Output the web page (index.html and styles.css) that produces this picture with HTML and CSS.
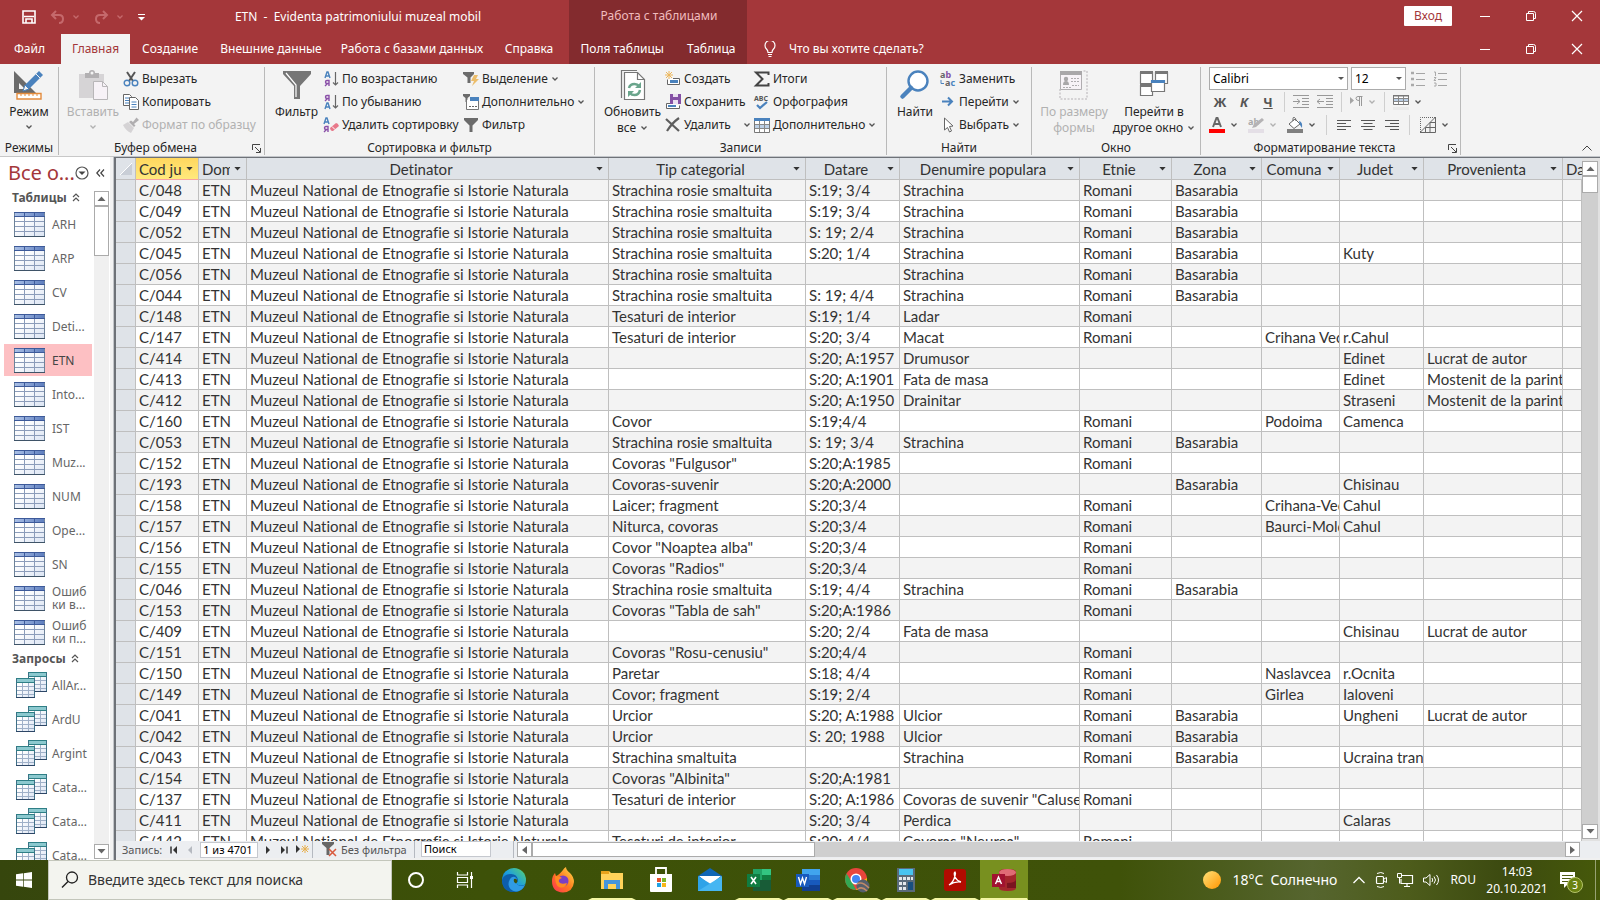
FILE: index.html
```html
<!DOCTYPE html>
<html lang="ru">
<head>
<meta charset="utf-8">
<title>ETN - Evidenta patrimoniului muzeal mobil</title>
<link rel="stylesheet" href="styles.css">
</head>
<body>
<svg class="defs" aria-hidden="true">
  <defs>
    <linearGradient id="gHead" x1="0" x2="1"><stop offset="0" stop-color="#a9bfe6"/><stop offset="1" stop-color="#5f7fbf"/></linearGradient>
    <linearGradient id="gBody" x1="0" y1="0" x2="1" y2="1"><stop offset="0.3" stop-color="#fff"/><stop offset="1" stop-color="#dbe4f3"/></linearGradient>
    <linearGradient id="gSun" x1="0" y1="0" x2="1" y2="1"><stop offset="0" stop-color="#ffe27a"/><stop offset="1" stop-color="#ff9500"/></linearGradient>
    <linearGradient id="gEdge" x1="0" y1="1" x2="1" y2="0"><stop offset="0" stop-color="#0c59a4"/><stop offset="0.5" stop-color="#1b9de2"/><stop offset="1" stop-color="#5bd66c"/></linearGradient>
    <linearGradient id="gFox" x1="0" y1="1" x2="1" y2="0"><stop offset="0" stop-color="#ff2f55"/><stop offset="0.5" stop-color="#ff7a1f"/><stop offset="1" stop-color="#ffe14a"/></linearGradient>
  </defs>
  <symbol id="chev" viewBox="0 0 8 6"><path d="M1.500 1.500 4 4l2.500-2.500" fill="none" stroke="currentColor" stroke-width="1.300"/></symbol>
  <symbol id="tbl" viewBox="0 0 31 25">
    <rect x=".5" y=".5" width="30" height="24" fill="url(#gBody)" stroke="#6d8299"/>
    <path d="M1 1h29v4H1z" fill="url(#gHead)"/><path d="M0 .5h31M0 4.500h31" stroke="#3d5a9a"/>
    <path d="M1 9.500h29M1 14.500h29M1 19.500h29M10.500 5v19M20.500 5v19" stroke="#8b9cba"/>
    <path d="M10.500 1v4M20.500 1v4" stroke="#3d5a9a"/><path d="M0 24.500h31" stroke="#3f5468"/>
  </symbol>
  <symbol id="qry" viewBox="0 0 31 26">
    <g id="qsheet"><rect x="12.500" y=".5" width="18" height="19" fill="url(#gBody)" stroke="#3f6f86"/><path d="M13 1h17v3H13z" fill="#8cc9cf"/><path d="M12 4.500h19M12 .5h19" stroke="#2f7f86"/><path d="M13 8.500h17M13 12.500h17M13 16.500h17M18.500 5v14M24.500 5v14" stroke="#9fb0c8"/><path d="M12 19.500h19" stroke="#2d4666"/></g>
    <use href="#qsheet" x="-12" y="6"/>
  </symbol>
  <symbol id="winmin" viewBox="0 0 12 12"><path d="M1 6.500h10" stroke="#fff"/></symbol>
  <symbol id="winres" viewBox="0 0 12 12"><path d="M1.500 3.500h7v7h-7zM3.500 3.500v-2h5q2 0 2 2v5h-2" fill="none" stroke="#fff"/></symbol>
  <symbol id="winx" viewBox="0 0 12 12"><path d="M1 1l10 10M11 1L1 11" stroke="#fff" stroke-width="1.200"/></symbol>
  <symbol id="launch" viewBox="0 0 9 9"><path d="M.5 6V.5H8M3 3l5 5M8.500 4v4.500H4" fill="none" stroke="#444"/></symbol>
  <symbol id="funnel" viewBox="0 0 16 16"><path d="M1 1h14v2L9.500 8.500V15h-3V8.500L1 3z" fill="#6b6b6b"/></symbol>
  <symbol id="arrdown" viewBox="0 0 9 5"><path d="M.5 0h8l-4 4.500z" fill="currentColor"/></symbol>
  <symbol id="dblup" viewBox="0 0 8 9"><path d="M1 4l3-3 3 3M1 8l3-3 3 3" fill="none" stroke="#555" stroke-width="1.200"/></symbol>
</svg>

<div class="app">
  <header class="titlebar">
    <div class="qat">
      <button aria-label="Сохранить файл"><svg width="14" height="14" viewBox="0 0 14 14"><path d="M1 1h12v12H1z" fill="none" stroke="#fff" stroke-width="1.600"/><path d="M2 6.500h10M4 13v-4h6v4" fill="none" stroke="#fff" stroke-width="1.600"/></svg></button>
      <button class="faded" aria-label="Отменить"><svg width="15" height="14" viewBox="0 0 15 14"><path d="M6 1 2 5l4 4M2 5h7q4 0 4 4t-4 4" fill="none" stroke="#c5696c" stroke-width="2"/></svg><svg class="chev" width="8" height="6"><use href="#chev"/></svg></button>
      <button class="faded" aria-label="Вернуть"><svg width="15" height="14" viewBox="0 0 15 14"><path d="M9 1l4 4-4 4M13 5H6Q2 5 2 9t4 4" fill="none" stroke="#c5696c" stroke-width="2"/></svg><svg class="chev" width="8" height="6"><use href="#chev"/></svg></button>
      <button aria-label="Настройка панели"><svg width="7" height="7" viewBox="0 0 7 7"><path d="M0 .5h7" stroke="#fff"/><path d="M0 3h7L3.500 6.500z" fill="#fff"/></svg></button>
    </div>
    <div class="doctitle">ETN&nbsp; -&nbsp; Evidenta patrimoniului muzeal mobil</div>
    <div class="ctxtitle">Работа с таблицами</div>
    <div class="winctl">
      <button class="login">Вход</button>
      <button aria-label="Свернуть"><svg width="12" height="12"><use href="#winmin"/></svg></button>
      <button aria-label="Восстановить"><svg width="12" height="12"><use href="#winres"/></svg></button>
      <button aria-label="Закрыть"><svg width="12" height="12"><use href="#winx"/></svg></button>
    </div>
  </header>

  <nav class="tabs">
    <button class="file">Файл</button>
    <button class="active">Главная</button>
    <button class="t3">Создание</button>
    <button class="t4">Внешние данные</button>
    <button class="t5">Работа с базами данных</button>
    <button class="t6">Справка</button>
    <div class="ctxtabs"><button>Поля таблицы</button><button>Таблица</button></div>
    <button class="tell"><svg width="12" height="17" viewBox="0 0 12 17"><path d="M4 11.500q0-2-1.500-3.500A5 5 0 1 1 9.500 8Q8 9.500 8 11.500zM4 13.500h4M4.500 15.500h3" fill="none" stroke="#fff" stroke-width="1.200"/></svg>Что вы хотите сделать?</button>
    <div class="winctl">
      <button aria-label="Свернуть документ"><svg width="12" height="12"><use href="#winmin"/></svg></button>
      <button aria-label="Восстановить документ"><svg width="12" height="12"><use href="#winres"/></svg></button>
      <button aria-label="Закрыть документ"><svg width="12" height="12"><use href="#winx"/></svg></button>
    </div>
  </nav>

  <section class="ribbon">
    <div class="group g1">
      <div class="tools">
        <button class="big"><svg width="32" height="32" viewBox="0 0 32 32"><path d="M1 2v22h22zM6 14l6 6H6z" fill="#6b6b6b" fill-rule="evenodd"/><path d="M10 22l2-6L26 2l4 4-14 14z" fill="#4a82bd"/><path d="M10 22l2-6 4 4z" fill="#f3f3f3" stroke="#4a82bd"/><path d="M26 2l4 4" stroke="#f3f3f3" stroke-width="1" transform="translate(-3 3)"/><path d="M4 24.500h24v5.500H4z" fill="#fff" stroke="#e38b3c" stroke-width="1.400"/><path d="M8 25v2M12 25v2M16 25v2M20 25v2M24 25v2" stroke="#e38b3c"/></svg><span>Режим</span><svg class="chev" width="8" height="6"><use href="#chev"/></svg></button>
      </div>
      <div class="caption"><span>Режимы</span></div>
    </div>
    <div class="group g2">
      <div class="tools">
        <button class="big" disabled><svg width="32" height="32" viewBox="0 0 32 32"><path d="M2 5h25v24H2z" fill="#d6d4d6"/><path d="M8 9V4h4q0-3 3-3t3 3h4v5z" fill="#b2b0b2"/><circle cx="15" cy="4" r="1.500" fill="#f3f3f3"/><path d="M16.500 12.500h9l5 5v13h-14z" fill="#f7f2f7" stroke="#b8b6b8"/><path d="M25.500 12.500v5h5" fill="none" stroke="#b8b6b8"/></svg><span>Вставить</span><svg class="chev" width="8" height="6"><use href="#chev"/></svg></button>
        <div class="col">
          <button class="cmd"><svg width="16" height="16" viewBox="0 0 16 16"><path d="M4 1l6 9M12 1L6 10" stroke="#555" stroke-width="2"/><circle cx="4" cy="12" r="2.800" fill="none" stroke="#4a82bd" stroke-width="1.400"/><circle cx="12" cy="12" r="2.800" fill="none" stroke="#4a82bd" stroke-width="1.400"/></svg>Вырезать</button>
          <button class="cmd"><svg width="16" height="16" viewBox="0 0 16 16"><path d="M.5.5h6l2 2v9h-8z" fill="#fff" stroke="#666"/><path d="M2 4h4M2 6.500h4M2 9h4" stroke="#4a82bd"/><path d="M6.500 3.500h6l3 3v9h-9z" fill="#fff" stroke="#666"/><path d="M8.500 8h5M8.500 10.500h5M8.500 13h5" stroke="#4a82bd"/></svg>Копировать</button>
          <button class="cmd" disabled><svg width="16" height="16" viewBox="0 0 16 16"><path d="M0 8l5-3 6 6-3 5q-5-2-8-8z" fill="#d5d3d5"/><path d="M6 5l5 5 1.500-1.500L11 7l5-4-2.500-2.500L10 5 8 3.500z" fill="#b0aeb0"/></svg>Формат по образцу</button>
        </div>
      </div>
      <div class="caption"><span>Буфер обмена</span><svg width="9" height="9"><use href="#launch"/></svg></div>
    </div>
    <div class="group g3">
      <div class="tools">
        <button class="big"><svg width="32" height="32" viewBox="0 0 32 32"><path d="M2 2h28v3L19 17v13h-6V17L2 5z" fill="#767676"/><path d="M5 4l10 12v12" fill="none" stroke="#fff" stroke-width="1.200"/></svg><span>Фильтр</span></button>
        <div class="col c1">
          <button class="cmd"><svg width="16" height="16" viewBox="0 0 16 16"><path d="M2 7l2-6h1l2 6M3 5h3" fill="none" stroke="#4a82bd" stroke-width="1.400"/><path d="M6 15V9.500H4q-1.500 0-1.500 1.500T4 12.500h2M4.500 12.500L2 15" fill="none" stroke="#8a4fa8" stroke-width="1.400"/><path d="M12.500 1v13M10 11.500l2.500 2.500 2.500-2.500" fill="none" stroke="#666" stroke-width="1.200"/></svg>По возрастанию</button>
          <button class="cmd"><svg width="16" height="16" viewBox="0 0 16 16"><path d="M2 15l2-6h1l2 6M3 13h3" fill="none" stroke="#4a82bd" stroke-width="1.400"/><path d="M6 7V1.500H4q-1.500 0-1.500 1.500T4 4.500h2M4.500 4.500L2 7" fill="none" stroke="#8a4fa8" stroke-width="1.400"/><path d="M12.500 1v13M10 11.500l2.500 2.500 2.500-2.500" fill="none" stroke="#666" stroke-width="1.200"/></svg>По убыванию</button>
          <button class="cmd"><svg width="16" height="16" viewBox="0 0 16 16"><path d="M1 7l2-6h1l2 6M2 5h3" fill="none" stroke="#4a82bd" stroke-width="1.400"/><path d="M5 15V9.500H3q-1.500 0-1.500 1.500T3 12.500h2M3.500 12.500L1 15" fill="none" stroke="#8a4fa8" stroke-width="1.400"/><path d="M7 11l6-5q2 0 3 3l-6 5q-2.500.5-3-3z" fill="#e8788a"/><path d="M9 9.500l3 3" stroke="#fff"/></svg>Удалить сортировку</button>
        </div>
        <div class="col">
          <button class="cmd"><svg width="16" height="16" viewBox="0 0 16 16"><path d="M0 1h11v2L7.500 6.500V12h-3V6.500L0 3z" fill="#6b6b6b"/><path d="M11 4h4l-2 4h3l-7 7 2-5H8z" fill="#ecbd6a"/></svg>Выделение<svg class="chev" width="8" height="6"><use href="#chev"/></svg></button>
          <button class="cmd"><svg width="16" height="16" viewBox="0 0 16 16"><path d="M0 0h7v2L4.500 4v4h-2V4L0 2z" fill="#6b6b6b"/><path d="M3.500 6v9.500h12V3" fill="#fff" stroke="#777"/><path d="M7 3h9v4H7z" fill="#4a82bd"/><path d="M6 12.500h2M9 12.500h2M12 12.500h2" stroke="#666"/></svg>Дополнительно<svg class="chev" width="8" height="6"><use href="#chev"/></svg></button>
          <button class="cmd"><svg width="16" height="16"><use href="#funnel"/></svg>Фильтр</button>
        </div>
      </div>
      <div class="caption"><span>Сортировка и фильтр</span></div>
    </div>
    <div class="group g4">
      <div class="tools">
        <button class="big"><svg width="32" height="32" viewBox="0 0 32 32"><path d="M4.500 29V1.500H20" fill="none" stroke="#777" stroke-width="1.200"/><path d="M7.500 3.500h13l7 7v20h-20z" fill="#fff" stroke="#777" stroke-width="1.200"/><path d="M20.500 3.500v7h7" fill="none" stroke="#777" stroke-width="1.200"/><path d="M12 19q1-4 5.500-4 3 0 4.500 2M23 21q-1 5-5.500 5-3 0-4.500-2" fill="none" stroke="#6aa58c" stroke-width="2.500"/><path d="M24 13v6h-6zM11 28v-6h6z" fill="#6aa58c"/></svg><span>Обновить</span><span>все <svg class="chev" width="8" height="6"><use href="#chev"/></svg></span></button>
        <div class="col c2">
          <button class="cmd"><svg width="16" height="16" viewBox="0 0 16 16"><path d="M4 0v8M0 4h8M1 1l6 6M7 1L1 7" stroke="#ecb65a"/><path d="M2.500 8.500v5h12v-6H8" fill="#fff" stroke="#666"/><path d="M5 9h8v3H5z" fill="#4a82bd"/></svg>Создать</button>
          <button class="cmd"><svg width="16" height="16" viewBox="0 0 16 16"><path d="M5 9.500H1.500v5h13v-3" fill="#fff" stroke="#666"/><path d="M3 11h8v2H3z" fill="#4a82bd"/><path d="M5 0h11v10H5z" fill="#8450a5"/><path d="M8 0h5v3H8zM8 6h5v4H8z" fill="#eadff0"/></svg>Сохранить</button>
          <button class="cmd"><svg width="16" height="16" viewBox="0 0 16 16"><path d="M1 2l13 12M14 1Q7 6 2 14" fill="none" stroke="#5e5e5e" stroke-width="2.200"/></svg>Удалить<svg class="chev far" width="8" height="6"><use href="#chev"/></svg></button>
        </div>
        <div class="col">
          <button class="cmd"><svg width="16" height="16" viewBox="0 0 16 16"><path d="M14.500 4V1.500H2L8.500 8 2 14.500h12.500V12" fill="none" stroke="#444" stroke-width="2"/></svg>Итоги</button>
          <button class="cmd"><svg width="16" height="16" viewBox="0 0 16 16"><text x="0" y="7" font-size="7" font-weight="700" fill="#555">ABC</text><path d="M3 11l3 3 7-6" fill="none" stroke="#4a82bd" stroke-width="2.200"/></svg>Орфография</button>
          <button class="cmd"><svg width="16" height="16" viewBox="0 0 16 16"><path d="M.5 3.500h15v12H.5z" fill="#fff" stroke="#777"/><path d="M0 1h16v3H0z" fill="#4a82bd"/><path d="M1 8h14v3H1z" fill="#bcd0e6"/><path d="M1 7.500h14M1 11.500h14M5.500 4v11M10.500 4v11" stroke="#888"/></svg>Дополнительно<svg class="chev" width="8" height="6"><use href="#chev"/></svg></button>
        </div>
      </div>
      <div class="caption"><span>Записи</span></div>
    </div>
    <div class="group g5">
      <div class="tools">
        <button class="big"><svg width="32" height="32" viewBox="0 0 32 32"><circle cx="19" cy="12" r="9.500" fill="#fff" stroke="#4a82bd" stroke-width="2.400"/><path d="M12 19L3.500 27.500" stroke="#4a82bd" stroke-width="4.500" stroke-linecap="round"/></svg><span>Найти</span></button>
        <div class="col">
          <button class="cmd"><svg width="16" height="16" viewBox="0 0 16 16"><g font-size="9" font-weight="700"><text x="0" y="7" fill="#666">a<tspan fill="#8450a5">b</tspan></text><text x="5" y="15" fill="#666">a<tspan fill="#4a82bd">c</tspan></text></g><path d="M1 9v3.500h3" fill="none" stroke="#4a82bd"/></svg>Заменить</button>
          <button class="cmd"><svg width="16" height="16" viewBox="0 0 16 16"><path d="M2 7.500h10M8 3.500l4 4-4 4" fill="none" stroke="#4a82bd" stroke-width="2"/></svg>Перейти<svg class="chev" width="8" height="6"><use href="#chev"/></svg></button>
          <button class="cmd"><svg width="16" height="16" viewBox="0 0 16 16"><path d="M4.500 1v12l3-2.500 2 4.500 2-1-2-4.500 3.500-.5z" fill="#fff" stroke="#666"/></svg>Выбрать<svg class="chev" width="8" height="6"><use href="#chev"/></svg></button>
        </div>
      </div>
      <div class="caption"><span>Найти</span></div>
    </div>
    <div class="group g6">
      <div class="tools">
        <button class="big" disabled><svg width="32" height="32" viewBox="0 0 32 32"><path d="M2 20v10h27V2h-4" fill="none" stroke="#b5b1b5" stroke-dasharray="2 1.500"/><path d="M2.500 2.500h21v18h-21z" fill="#f7f2f7" stroke="#b0adb0"/><path d="M2 2h22v4H2z" fill="#a9a7a9"/><circle cx="8" cy="10" r="2.200" fill="#a9a7a9"/><path d="M5 16q0-4 3-4t3 4z" fill="#a9a7a9"/><path d="M13 9.500h8M13 12.500h8M14 16.500h7M5 18.500h8" stroke="#b0adb0" stroke-dasharray="2 1"/></svg><span>По размеру</span><span>формы</span></button>
        <button class="big"><svg width="32" height="32" viewBox="0 0 32 32"><g fill="#fff" stroke="#777" stroke-width="1.200"><path d="M2.500 3.500h12v11h-12zM17.500 3.500h12v11h-12zM2.500 16.500h12v10h-12z"/></g><path d="M2 2h13v3H2zM17 2h13v3H17zM2 15h13v3H2z" fill="#777"/><path d="M13.500 11.500h13v11h-13z" fill="#fff" stroke="#777" stroke-width="1.200"/><path d="M13 11h14v3H13z" fill="#4a82bd"/></svg><span>Перейти в</span><span>другое окно <svg class="chev" width="8" height="6"><use href="#chev"/></svg></span></button>
      </div>
      <div class="caption"><span>Окно</span></div>
    </div>
    <div class="group g7">
      <div class="fmt">
        <div class="frow">
          <label class="combo font"><select aria-label="Шрифт"><option>Calibri</option></select></label>
          <label class="combo size"><select aria-label="Размер шрифта"><option>12</option></select></label>
          <button disabled aria-label="Маркеры"><svg width="14" height="16" viewBox="0 0 14 16"><path d="M0 2h3M0 8h3M0 14h3" stroke="#aaa" stroke-width="2.500"/><path d="M5 2.500h9M5 8.500h9M5 14.500h9" stroke="#a5a5a5"/></svg></button>
          <button disabled aria-label="Нумерация"><svg width="14" height="16" viewBox="0 0 14 16"><path d="M1 1h1.500v4M1 6.500h2L1 9.500h2M1 12h2v3H1" fill="none" stroke="#aaa"/><path d="M5 2.500h9M5 8.500h9M5 14.500h9" stroke="#a5a5a5"/></svg></button>
        </div>
        <div class="frow second">
          <button class="ltr"><b>Ж</b></button><button class="ltr"><b><i>К</i></b></button><button class="ltr"><b><u>Ч</u></b></button>
          <span class="vs"></span>
          <button disabled aria-label="Увеличить отступ"><svg width="16" height="13" viewBox="0 0 16 13"><path d="M0 .5h16M9 3.500h7M9 6.500h7M9 9.500h7M0 12.500h16M0 6.500h7M4 4l3 2.500L4 9" fill="none" stroke="#999"/></svg></button>
          <button disabled aria-label="Уменьшить отступ"><svg width="16" height="13" viewBox="0 0 16 13"><path d="M0 .5h16M9 3.500h7M9 6.500h7M9 9.500h7M0 12.500h16M0 6.500h7M3 4L0 6.500 3 9" fill="none" stroke="#999"/></svg></button>
          <span class="vs"></span>
          <button disabled class="wd" aria-label="Направление текста"><svg width="13" height="11" viewBox="0 0 13 11"><path d="M0 1v7l4-3.500z" fill="#a5a5a5"/><path d="M12.500.5H8q-2 0-2 2t3 2M9.500 0v10M11.500 0v10" fill="none" stroke="#999"/></svg><svg class="chev" width="8" height="6"><use href="#chev"/></svg></button>
          <span class="vs"></span>
          <button class="wd" aria-label="Сетка"><svg width="16" height="16" viewBox="0 0 16 16"><path d="M.5 1.500h15v9H.5z" fill="#fff" stroke="#777"/><path d="M0 1h16v1.500H0z" fill="#777"/><path d="M1 5h14v2.500H1z" fill="#bcd0e6"/><path d="M1 4.500h14M1 7.500h14M5.500 2v8M10.500 2v8" stroke="#888"/><path d="M0 13h16v3H0z" fill="#eaeaea"/></svg><svg class="chev" width="8" height="6"><use href="#chev"/></svg></button>
        </div>
        <div class="frow third">
          <button class="wd" aria-label="Цвет текста"><svg width="16" height="16" viewBox="0 0 16 16"><path d="M4 10L7.500 1h1L12 10M5.500 7h5" fill="none" stroke="#666" stroke-width="2"/><path d="M0 12h16v4H0z" fill="#f00"/></svg><svg class="chev" width="8" height="6"><use href="#chev"/></svg></button>
          <button class="wd" disabled aria-label="Выделение цветом"><svg width="16" height="16" viewBox="0 0 16 16"><text x="0" y="8" font-size="9" font-weight="700" fill="#aaa">ab</text><path d="M4 11l2-4 8-6 2 2-8 7z" fill="#b5b3b5"/><path d="M0 12h16v4H0z" fill="#e4dfe6"/></svg><svg class="chev" width="8" height="6"><use href="#chev"/></svg></button>
          <button class="wd" aria-label="Цвет фона"><svg width="16" height="16" viewBox="0 0 16 16"><path d="M2 7l6-5 5 5-6 4.500z" fill="#fff" stroke="#666"/><path d="M6 4V1.500q0-1.500 1.500-1T9 4" fill="none" stroke="#666"/><path d="M12 4q4 1 3 7l-2-3z" fill="#4a82bd"/><path d="M0 12h16v4H0z" fill="#7f7f7f"/></svg><svg class="chev" width="8" height="6"><use href="#chev"/></svg></button>
          <span class="vs"></span>
          <button aria-label="По левому краю"><svg width="14" height="12" viewBox="0 0 14 12"><path d="M0 1.500h14M0 4.500h9M0 7.500h14M0 10.500h9" stroke="#555"/></svg></button>
          <button aria-label="По центру"><svg width="14" height="12" viewBox="0 0 14 12"><path d="M0 1.500h14M2.500 4.500h9M0 7.500h14M2.500 10.500h9" stroke="#555"/></svg></button>
          <button aria-label="По правому краю"><svg width="14" height="12" viewBox="0 0 14 12"><path d="M0 1.500h14M5 4.500h9M0 7.500h14M5 10.500h9" stroke="#555"/></svg></button>
          <span class="vs"></span>
          <button class="wd" aria-label="Цвет строк"><svg width="16" height="16" viewBox="0 0 16 16"><path d="M.5 15V.5H15" fill="none" stroke="#666" stroke-dasharray="1 1"/><path d="M15.500 0v15.500H0zM15 5.500h-5v10M15 10.500H5.500v5" fill="none" stroke="#666"/></svg><svg class="chev" width="8" height="6"><use href="#chev"/></svg></button>
        </div>
      </div>
      <div class="caption"><span>Форматирование текста</span><svg width="9" height="9"><use href="#launch"/></svg></div>
    </div>
    <button class="collapse" aria-label="Свернуть ленту"><svg width="10" height="6" viewBox="0 0 10 6"><path d="M.5 5.500L5 1l4.500 4.500" fill="none" stroke="#444"/></svg></button>
  </section>

  <main class="work">
    <aside class="nav">
      <div class="navhead">
        <h1>Все о...</h1>
        <button aria-label="Категории"><svg width="14" height="14" viewBox="0 0 14 14"><circle cx="7" cy="7" r="6" fill="none" stroke="#555" stroke-width="1.200"/><path d="M3.500 5.500h7L7 9z" fill="#444"/></svg></button>
        <button aria-label="Скрыть область"><svg width="9" height="8" viewBox="0 0 9 8"><path d="M4 .5L.8 4 4 7.500M8 .5L4.800 4 8 7.500" fill="none" stroke="#444" stroke-width="1.200"/></svg></button>
      </div>
      <div class="navbody">
        <div class="navlist">
          <h2>Таблицы <svg width="8" height="9"><use href="#dblup"/></svg></h2>
          <ul>
            <li><svg width="31" height="25"><use href="#tbl"/></svg><span>ARH</span></li>
            <li><svg width="31" height="25"><use href="#tbl"/></svg><span>ARP</span></li>
            <li><svg width="31" height="25"><use href="#tbl"/></svg><span>CV</span></li>
            <li><svg width="31" height="25"><use href="#tbl"/></svg><span>Deti...</span></li>
            <li class="sel"><svg width="31" height="25"><use href="#tbl"/></svg><span>ETN</span></li>
            <li><svg width="31" height="25"><use href="#tbl"/></svg><span>Into...</span></li>
            <li><svg width="31" height="25"><use href="#tbl"/></svg><span>IST</span></li>
            <li><svg width="31" height="25"><use href="#tbl"/></svg><span>Muz...</span></li>
            <li><svg width="31" height="25"><use href="#tbl"/></svg><span>NUM</span></li>
            <li><svg width="31" height="25"><use href="#tbl"/></svg><span>Ope...</span></li>
            <li><svg width="31" height="25"><use href="#tbl"/></svg><span>SN</span></li>
            <li><svg width="31" height="25"><use href="#tbl"/></svg><span>Ошиб<br>ки в...</span></li>
            <li><svg width="31" height="25"><use href="#tbl"/></svg><span>Ошиб<br>ки п...</span></li>
          </ul>
          <h2>Запросы <svg width="8" height="9"><use href="#dblup"/></svg></h2>
          <ul class="queries">
            <li><svg width="31" height="26"><use href="#qry"/></svg><span>AllAr...</span></li>
            <li><svg width="31" height="26"><use href="#qry"/></svg><span>ArdU</span></li>
            <li><svg width="31" height="26"><use href="#qry"/></svg><span>Argint</span></li>
            <li><svg width="31" height="26"><use href="#qry"/></svg><span>Cata...</span></li>
            <li><svg width="31" height="26"><use href="#qry"/></svg><span>Cata...</span></li>
            <li><svg width="31" height="26"><use href="#qry"/></svg><span>Cata...</span></li>
          </ul>
        </div>
        <div class="vscroll light">
          <button class="up" aria-label="Вверх"><svg width="9" height="5"><use href="#arrdown"/></svg></button>
          <div class="thumb"></div>
          <button class="down" aria-label="Вниз"><svg width="9" height="5"><use href="#arrdown"/></svg></button>
        </div>
      </div>
    </aside>

    <section class="sheet">
      <div class="gridrow">
        <div class="gridwrap">
<table class="grid">
<colgroup><col class="w0"><col class="w1"><col class="w2"><col class="w3"><col class="w4"><col class="w5"><col class="w6"><col class="w7"><col class="w8"><col class="w9"><col class="w10"><col class="w11"><col></colgroup>
<thead><tr>
<td class="corner"><svg width="12" height="12" viewBox="0 0 12 12"><path d="M12 0v12H0z" fill="#c9ced6"/><path d="M0 12L12 0" stroke="#fff"/></svg></td>
<th class="cur"><div><span class="l">Cod ju</span><svg viewBox="0 0 9 5"><use href="#arrdown"/></svg></div></th>
<th><div><span class="l">Dom</span><svg viewBox="0 0 9 5"><use href="#arrdown"/></svg></div></th>
<th><div><span>Detinator</span><svg viewBox="0 0 9 5"><use href="#arrdown"/></svg></div></th>
<th><div><span>Tip categorial</span><svg viewBox="0 0 9 5"><use href="#arrdown"/></svg></div></th>
<th><div><span>Datare</span><svg viewBox="0 0 9 5"><use href="#arrdown"/></svg></div></th>
<th><div><span>Denumire populara</span><svg viewBox="0 0 9 5"><use href="#arrdown"/></svg></div></th>
<th><div><span>Etnie</span><svg viewBox="0 0 9 5"><use href="#arrdown"/></svg></div></th>
<th><div><span>Zona</span><svg viewBox="0 0 9 5"><use href="#arrdown"/></svg></div></th>
<th><div><span>Comuna</span><svg viewBox="0 0 9 5"><use href="#arrdown"/></svg></div></th>
<th><div><span>Judet</span><svg viewBox="0 0 9 5"><use href="#arrdown"/></svg></div></th>
<th><div><span>Provenienta</span><svg viewBox="0 0 9 5"><use href="#arrdown"/></svg></div></th>
<th class="last"><div><span class="l">Da</span></div></th>
</tr></thead>
<tbody>
<tr><td><td>C/048<td>ETN<td>Muzeul National de Etnografie si Istorie Naturala<td>Strachina rosie smaltuita<td>S:19; 3/4<td>Strachina<td>Romani<td>Basarabia<td><td><td><td>
<tr><td><td>C/049<td>ETN<td>Muzeul National de Etnografie si Istorie Naturala<td>Strachina rosie smaltuita<td>S:19; 3/4<td>Strachina<td>Romani<td>Basarabia<td><td><td><td>
<tr><td><td>C/052<td>ETN<td>Muzeul National de Etnografie si Istorie Naturala<td>Strachina rosie smaltuita<td>S: 19; 2/4<td>Strachina<td>Romani<td>Basarabia<td><td><td><td>
<tr><td><td>C/045<td>ETN<td>Muzeul National de Etnografie si Istorie Naturala<td>Strachina rosie smaltuita<td>S:20; 1/4<td>Strachina<td>Romani<td>Basarabia<td><td>Kuty<td><td>
<tr><td><td>C/056<td>ETN<td>Muzeul National de Etnografie si Istorie Naturala<td>Strachina rosie smaltuita<td><td>Strachina<td>Romani<td>Basarabia<td><td><td><td>
<tr><td><td>C/044<td>ETN<td>Muzeul National de Etnografie si Istorie Naturala<td>Strachina rosie smaltuita<td>S: 19; 4/4<td>Strachina<td>Romani<td>Basarabia<td><td><td><td>
<tr><td><td>C/148<td>ETN<td>Muzeul National de Etnografie si Istorie Naturala<td>Tesaturi de interior<td>S:19; 1/4<td>Ladar<td>Romani<td><td><td><td><td>
<tr><td><td>C/147<td>ETN<td>Muzeul National de Etnografie si Istorie Naturala<td>Tesaturi de interior<td>S:20; 3/4<td>Macat<td>Romani<td><td>Crihana Vec<td>r.Cahul<td><td>
<tr><td><td>C/414<td>ETN<td>Muzeul National de Etnografie si Istorie Naturala<td><td>S:20; A:1957<td>Drumusor<td><td><td><td>Edinet<td>Lucrat de autor<td>
<tr><td><td>C/413<td>ETN<td>Muzeul National de Etnografie si Istorie Naturala<td><td>S:20; A:1901<td>Fata de masa<td><td><td><td>Edinet<td>Mostenit de la parint<td>
<tr><td><td>C/412<td>ETN<td>Muzeul National de Etnografie si Istorie Naturala<td><td>S:20; A:1950<td>Drainitar<td><td><td><td>Straseni<td>Mostenit de la parint<td>
<tr><td><td>C/160<td>ETN<td>Muzeul National de Etnografie si Istorie Naturala<td>Covor<td>S:19;4/4<td><td>Romani<td><td>Podoima<td>Camenca<td><td>
<tr><td><td>C/053<td>ETN<td>Muzeul National de Etnografie si Istorie Naturala<td>Strachina rosie smaltuita<td>S: 19; 3/4<td>Strachina<td>Romani<td>Basarabia<td><td><td><td>
<tr><td><td>C/152<td>ETN<td>Muzeul National de Etnografie si Istorie Naturala<td>Covoras "Fulgusor"<td>S:20;A:1985<td><td>Romani<td><td><td><td><td>
<tr><td><td>C/193<td>ETN<td>Muzeul National de Etnografie si Istorie Naturala<td>Covoras-suvenir<td>S:20;A:2000<td><td><td>Basarabia<td><td>Chisinau<td><td>
<tr><td><td>C/158<td>ETN<td>Muzeul National de Etnografie si Istorie Naturala<td>Laicer; fragment<td>S:20;3/4<td><td>Romani<td><td>Crihana-Vec<td>Cahul<td><td>
<tr><td><td>C/157<td>ETN<td>Muzeul National de Etnografie si Istorie Naturala<td>Niturca, covoras<td>S:20;3/4<td><td>Romani<td><td>Baurci-Mold<td>Cahul<td><td>
<tr><td><td>C/156<td>ETN<td>Muzeul National de Etnografie si Istorie Naturala<td>Covor "Noaptea alba"<td>S:20;3/4<td><td>Romani<td><td><td><td><td>
<tr><td><td>C/155<td>ETN<td>Muzeul National de Etnografie si Istorie Naturala<td>Covoras "Radios"<td>S:20;3/4<td><td>Romani<td><td><td><td><td>
<tr><td><td>C/046<td>ETN<td>Muzeul National de Etnografie si Istorie Naturala<td>Strachina rosie smaltuita<td>S:19; 4/4<td>Strachina<td>Romani<td>Basarabia<td><td><td><td>
<tr><td><td>C/153<td>ETN<td>Muzeul National de Etnografie si Istorie Naturala<td>Covoras "Tabla de sah"<td>S:20;A:1986<td><td>Romani<td><td><td><td><td>
<tr><td><td>C/409<td>ETN<td>Muzeul National de Etnografie si Istorie Naturala<td><td>S:20; 2/4<td>Fata de masa<td><td><td><td>Chisinau<td>Lucrat de autor<td>
<tr><td><td>C/151<td>ETN<td>Muzeul National de Etnografie si Istorie Naturala<td>Covoras "Rosu-cenusiu"<td>S:20;4/4<td><td>Romani<td><td><td><td><td>
<tr><td><td>C/150<td>ETN<td>Muzeul National de Etnografie si Istorie Naturala<td>Paretar<td>S:18; 4/4<td><td>Romani<td><td>Naslavcea<td>r.Ocnita<td><td>
<tr><td><td>C/149<td>ETN<td>Muzeul National de Etnografie si Istorie Naturala<td>Covor; fragment<td>S:19; 2/4<td><td>Romani<td><td>Girlea<td>Ialoveni<td><td>
<tr><td><td>C/041<td>ETN<td>Muzeul National de Etnografie si Istorie Naturala<td>Urcior<td>S:20; A:1988<td>Ulcior<td>Romani<td>Basarabia<td><td>Ungheni<td>Lucrat de autor<td>
<tr><td><td>C/042<td>ETN<td>Muzeul National de Etnografie si Istorie Naturala<td>Urcior<td>S: 20; 1988<td>Ulcior<td>Romani<td>Basarabia<td><td><td><td>
<tr><td><td>C/043<td>ETN<td>Muzeul National de Etnografie si Istorie Naturala<td>Strachina smaltuita<td><td>Strachina<td>Romani<td>Basarabia<td><td>Ucraina tran<td><td>
<tr><td><td>C/154<td>ETN<td>Muzeul National de Etnografie si Istorie Naturala<td>Covoras "Albinita"<td>S:20;A:1981<td><td><td><td><td><td><td>
<tr><td><td>C/137<td>ETN<td>Muzeul National de Etnografie si Istorie Naturala<td>Tesaturi de interior<td>S:20; A:1986<td>Covoras de suvenir "Caluse<td>Romani<td><td><td><td><td>
<tr><td><td>C/411<td>ETN<td>Muzeul National de Etnografie si Istorie Naturala<td><td>S:20; 3/4<td>Perdica<td><td><td><td>Calaras<td><td>
<tr><td><td>C/142<td>ETN<td>Muzeul National de Etnografie si Istorie Naturala<td>Tesaturi de interior<td>S:20; 4/4<td>Covoras "Neurea"<td>Romani<td><td><td><td><td>
</tbody>
</table>
        </div>
        <div class="vscroll dark">
          <button class="up" aria-label="Вверх"><svg width="9" height="5"><use href="#arrdown"/></svg></button>
          <div class="thumb"></div>
          <button class="down" aria-label="Вниз"><svg width="9" height="5"><use href="#arrdown"/></svg></button>
        </div>
      </div>
      <div class="recbar">
        <div class="recnav">
          <label for="rec">Запись:</label>
          <button aria-label="Первая"><svg width="8" height="8" viewBox="0 0 8 8"><path d="M1 .5v7" stroke="#333" stroke-width="1.500"/><path d="M7 0v8L3 4z" fill="#333"/></svg></button>
          <button aria-label="Предыдущая"><svg width="8" height="8" viewBox="0 0 8 8"><path d="M6 0v8L2 4z" fill="#b5b9c0"/></svg></button>
          <input id="rec" class="rec" value="1 из 4701">
          <button aria-label="Следующая"><svg width="8" height="8" viewBox="0 0 8 8"><path d="M2 0v8l4-4z" fill="#333"/></svg></button>
          <button aria-label="Последняя"><svg width="8" height="8" viewBox="0 0 8 8"><path d="M7 .5v7" stroke="#333" stroke-width="1.500"/><path d="M1 0v8l4-4z" fill="#333"/></svg></button>
          <button aria-label="Новая запись"><svg width="13" height="9" viewBox="0 0 13 9"><path d="M0 0v8l4-4z" fill="#333"/><path d="M9 0v8M5 4h8M6 1l6 6M12 1L6 7" stroke="#e8b04f"/></svg></button>
        </div>
        <button class="nofilter"><svg width="15" height="15" viewBox="0 0 15 15"><path d="M0 0h12v2L7.500 6v7h-3V6L0 2z" fill="#666"/><path d="M7 7l7 7M14 7l-7 7" stroke="#d9583b" stroke-width="1.500"/></svg>Без фильтра</button>
        <div class="find"><input class="search" aria-label="Поиск" value="Поиск"></div>
        <div class="hscroll">
          <button class="left" aria-label="Влево"><svg width="5" height="8" viewBox="0 0 5 8"><path d="M5 0v8L0 4z" fill="#666"/></svg></button>
          <div class="thumb"></div>
          <button class="right" aria-label="Вправо"><svg width="5" height="8" viewBox="0 0 5 8"><path d="M0 0v8l5-4z" fill="#666"/></svg></button>
        </div>
      </div>
    </section>
  </main>

  <footer class="taskbar">
    <button class="start" aria-label="Пуск"><svg width="16" height="16" viewBox="0 0 16 16"><path d="M0 2.300L7 1.300V7.600H0zM7.700 1.200L16 0v7.600H7.700zM0 8.400h7v6.300L0 13.700zM7.700 8.400H16V16l-8.300-1.200z" fill="#fff"/></svg></button>
    <label class="wsearch"><svg width="18" height="18" viewBox="0 0 18 18"><circle cx="11" cy="6.500" r="5.500" fill="none" stroke="#222" stroke-width="1.300"/><path d="M7 10.500L1 16.500" stroke="#222" stroke-width="1.500"/></svg><input type="text" placeholder="Введите здесь текст для поиска"></label>
    <div class="apps">
      <button aria-label="Кортана"><svg width="24" height="26" viewBox="0 0 24 26"><circle cx="12" cy="13" r="7" fill="none" stroke="#fff" stroke-width="2"/></svg></button>
      <button aria-label="Представление задач"><svg width="24" height="26" viewBox="0 0 24 26"><path d="M4.500 5v3h10V5M4.500 21v-3h10v3M4.500 10.500h10v5h-10zM18.500 5v16" fill="none" stroke="#fff" stroke-width="1.200"/><path d="M17 9h3v3h-3z" fill="#fff"/></svg></button>
      <button aria-label="Edge"><svg width="26" height="26" viewBox="0 0 26 26"><circle cx="13" cy="13" r="12" fill="url(#gEdge)"/><path d="M1 13Q3 7 10 7q6 0 7 6 0 2-1.500 3 1 3 5 2.500 2 0 4-1.500-3 8-12 8Q1 25 1 13z" fill="#0d5eab"/><path d="M9 12q2-3 5-2 3 1.500 1.500 5 0 4 5.500 4 2-.5 3-1-3 6-9 6.500-7-1-7.500-7 0-3 1.500-5.500z" fill="#2f9be4"/><path d="M13 12q2-1 3 1t-1 3.500Q12 15 13 12z" fill="#3d5108"/></svg></button>
      <button aria-label="Firefox"><svg width="26" height="26" viewBox="0 0 26 26"><path d="M13 3q1-2 3-3 0 3 4 6 4 4 4 9-1 10-11 10.500Q2 25 2 14q0-5 3-8l1 3q3-1 7-6z" fill="url(#gFox)"/><circle cx="13" cy="14" r="5.500" fill="#7a3fc4"/><path d="M5 9q5 0 7 2-4 1-3 4 2 3 8 1-2 6-8 4-4-2-4-11z" fill="#ff8a22"/></svg></button>
      <button class="run" aria-label="Проводник"><svg width="24" height="22" viewBox="0 0 24 22"><path d="M1 2h8l2 2h12v16H1z" fill="#ffd35a"/><path d="M1 2h8v3H1z" fill="#e8a41c"/><path d="M4 20v-9h16v9h-4v-5H8v5z" fill="#4495dc"/></svg></button>
      <button aria-label="Магазин"><svg width="24" height="26" viewBox="0 0 24 26"><path d="M7 7V1h10v6" fill="none" stroke="#fff" stroke-width="1.800"/><path d="M1 7h22v17q0 1-1 1H2q-1 0-1-1z" fill="#fff"/><path d="M8 11h4v4H8z" fill="#e8502a"/><path d="M13 11h4v4h-4z" fill="#7db62a"/><path d="M8 16h4v4H8z" fill="#1fa2e4"/><path d="M13 16h4v4h-4z" fill="#f8b71a"/></svg></button>
      <button aria-label="Почта"><svg width="24" height="26" viewBox="0 0 24 26"><path d="M0 9l12-8 12 8v15H0z" fill="#1066b5"/><path d="M1 9h22l-11 9z" fill="#fff"/><path d="M0 9l24 15H0z" fill="#2ea3e8"/><path d="M24 9v15H0z" fill="#46b6f2"/></svg></button>
      <button class="run" aria-label="Excel"><svg width="24" height="24" viewBox="0 0 24 24"><path d="M6 1h9v11H6z" fill="#21a366"/><path d="M15 1h9v6h-9z" fill="#33c481"/><path d="M15 7h9v10h-9z" fill="#107c41"/><path d="M6 12h18v11H6z" fill="#185c37"/><path d="M0 6h13v13H0z" fill="#107c41"/><path d="M4 9l5 7M9 9l-5 7" stroke="#fff" stroke-width="1.600"/></svg></button>
      <button class="run" aria-label="Word"><svg width="24" height="24" viewBox="0 0 24 24"><path d="M6 1h18v6H6z" fill="#41a5ee"/><path d="M6 7h18v5H6z" fill="#2b7cd3"/><path d="M6 12h18v5H6z" fill="#185abd"/><path d="M6 17h18v6H6z" fill="#103f91"/><path d="M0 6h13v13H0z" fill="#185abd"/><path d="M2.500 9l2 7 2-6 2 6 2-7" fill="none" stroke="#fff" stroke-width="1.400"/></svg></button>
      <button class="run" aria-label="Chrome"><svg width="26" height="26" viewBox="0 0 26 26"><circle cx="12" cy="12" r="11" fill="#e8453c"/><path d="M2.500 6.500L9 17l3 6Q1 22 1 12q0-3 1.500-5.500z" fill="#34a853"/><path d="M23 11q0 11-11 12l5-8z" fill="#fbbc05"/><circle cx="12" cy="12" r="5.500" fill="#fff"/><circle cx="12" cy="12" r="4" fill="#4285f4"/><circle cx="19" cy="19" r="6.500" fill="#555f6c"/><path d="M13 17q5-3 12 4M14 22q4-3 9 2" fill="none" stroke="#c08a68" stroke-width="1.500"/></svg></button>
      <button class="run" aria-label="Калькулятор"><svg width="18" height="26" viewBox="0 0 18 26"><path d="M0 1h18v24H0z" fill="#5a6b7a"/><path d="M2 2h14v6H2z" fill="#48c4f0"/><g fill="#e3e7ea"><path d="M2 10h3v3H2zM6 10h3v3H6zM10 10h3v3h-3zM2 15h3v3H2zM6 15h3v3H6zM2 20h3v3H2zM6 20h3v3H6zM14 10h2v3h-2z"/></g><path d="M11 15h5v8h-5z" fill="#184f80"/></svg></button>
      <button class="run" aria-label="Acrobat"><svg width="22" height="24" viewBox="0 0 22 24"><rect x="0" y="1" width="22" height="22" rx="3" fill="#b30b00"/><path d="M5 17q4-2 6-9 1-3 0-4-1.500 1 0 5 2 4 6 5-6-1-12 3z" fill="none" stroke="#fff" stroke-width="1.300"/></svg></button>
      <button class="run on" aria-label="Access"><svg width="24" height="24" viewBox="0 0 24 24"><path d="M7 4q0-3 8.500-3T24 4v16q0 3-8.500 3T7 20z" fill="#a4262c"/><ellipse cx="15.500" cy="4.500" rx="8.500" ry="3.500" fill="#e06b75"/><path d="M24 11q0 4-9 4v5h9z" fill="#7a1420"/><path d="M0 6h13v13H0z" fill="#a11230"/><path d="M3.500 16l3-7 3 7M4.500 13.500h4" fill="none" stroke="#fff" stroke-width="1.400"/></svg></button>
    </div>
    <div class="tray">
      <button class="weather"><svg width="20" height="20" viewBox="0 0 20 20"><circle cx="10" cy="10" r="9" fill="url(#gSun)"/></svg><span>18°C&nbsp; Солнечно</span></button>
      <button aria-label="Скрытые значки"><svg width="12" height="8" viewBox="0 0 12 8"><path d="M.5 7L6 1.500 11.500 7" fill="none" stroke="#fff" stroke-width="1.300"/></svg></button>
      <button aria-label="Камера"><svg width="14" height="18" viewBox="0 0 14 18"><path d="M3 2.500q4-2 7 0M3 15.500q4 2 7 0" fill="none" stroke="#fff"/><rect x="2.500" y="5.500" width="7" height="7" rx="1" fill="none" stroke="#fff" stroke-width="1.200"/><path d="M10 8l2.500-1.500v5L10 10" fill="none" stroke="#fff"/></svg></button>
      <button aria-label="Сеть"><svg width="17" height="16" viewBox="0 0 17 16"><path d="M4 3.500h11.500v8H4V7M7 14.500h6M10 12v2.500" fill="none" stroke="#fff" stroke-width="1.200"/><path d="M.5 1.500h4v4h-4zM2.500 5.500v6" fill="none" stroke="#fff"/></svg></button>
      <button aria-label="Громкость"><svg width="17" height="14" viewBox="0 0 17 14"><path d="M.5 5h2.500l4-3.500v11L3 9H.5z" fill="none" stroke="#fff"/><path d="M9 5q1.500 2 0 4M11 3.500q3 3.500 0 7M13.500 2q4 5 0 10" fill="none" stroke="#fff"/></svg></button>
      <button class="lang">ROU</button>
      <button class="clock"><span>14:03</span><span>20.10.2021</span></button>
      <button class="notif" aria-label="Уведомления"><svg width="18" height="18" viewBox="0 0 18 18"><path d="M1 1h15v12H9l-4 4v-4H1z" fill="#fff"/><path d="M3 4.500h11M3 7.500h11M3 10.500h7" stroke="#4d5c13"/></svg><span class="badge">3</span></button>
      <span class="peek"></span>
    </div>
  </footer>
</div>
</body>
</html>
```

FILE: styles.css
```css
* { box-sizing: border-box; }
body { margin: 0; font: 12px/16px "Noto Sans", "Open Sans", sans-serif; color: #262626; }
button { font: inherit; color: inherit; background: none; border: 0; padding: 0; margin: 0; }
input, select { font: inherit; color: #000; }
h1, h2, ul { margin: 0; padding: 0; font-weight: 400; list-style: none; }
svg { display: block; flex: none; }
.defs { position: absolute; width: 0; height: 0; }
.app { display: flex; flex-direction: column; height: 100vh; overflow: hidden; background: #f3f3f3; }

/* Title bar */
.titlebar { display: flex; flex: none; height: 34px; background: #a4373a; color: #fff; }
.qat { display: flex; align-items: center; gap: 14px; width: 160px; padding-left: 22px; }
.qat button { display: flex; align-items: center; gap: 7px; }
.qat .faded { color: #c5696c; }
.doctitle { width: 409px; padding: 9px 88px 0 0; text-align: right; white-space: nowrap; }
.ctxtitle { width: 178px; padding: 8px 0 0 2px; text-align: center; background: #832b2e; color: #f0bcbe; white-space: nowrap; }
.winctl { display: flex; align-items: center; margin-left: auto; padding-right: 17px; gap: 34px; }
.titlebar .winctl { padding-bottom: 3px; }
.winctl .login { width: 48px; height: 20px; margin-right: -7px; background: #fff; color: #a4373a; border-radius: 1px; }

/* Ribbon tabs */
.tabs { display: flex; flex: none; height: 30px; background: #a4373a; color: #fff; white-space: nowrap; }
.tabs .file { width: 61px; padding-right: 2px; }
.tabs .active { width: 69px; background: #f3f3f3; color: #a4373a; }
.tabs .t3 { width: 80px; }
.tabs .t4 { width: 122px; }
.tabs .t5 { width: 160px; }
.tabs .t6 { width: 77px; padding-right: 3px; }
.ctxtabs { display: flex; width: 178px; background: #832b2e; }
.ctxtabs button { flex: 1 1 auto; }
.tell { display: flex; align-items: center; gap: 13px; padding-left: 17px; }

/* Ribbon */
.ribbon { display: flex; flex: none; height: 92px; padding-top: 3px; white-space: nowrap; }
.group { display: flex; flex-direction: column; flex: none; height: 88px; border-right: 1px solid #b9b9b9; }
.tools, .fmt { display: flex; flex: none; height: 70px; }
.caption { display: flex; align-items: center; justify-content: center; flex: none; height: 18px; padding-top: 4px; }
.caption span { flex: 1; text-align: center; }
.caption svg { margin-right: 3px; }
.g1 { width: 59px; }
.g2 { width: 206px; }
.g3 { width: 330px; }
.g4 { width: 292px; }
.g5 { width: 145px; }
.g6 { width: 169px; }
.g7 { width: 260px; }
.big { display: flex; flex: none; flex-direction: column; align-items: center; padding-top: 2px; }
.big > svg:first-child { margin-bottom: 3px; }
.big > .chev { margin-top: 4px; }
.big span { display: flex; align-items: center; gap: 4px; }
button:disabled { color: #b1b1b1; }
.g1 .big { width: 58px; }
.g2 .big { width: 64px; padding-left: 4px; }
.g3 .big { width: 58px; padding-left: 5px; }
.g4 .big { width: 70px; padding-left: 5px; }
.g5 .big { width: 53px; padding-left: 3px; }
.g6 .big { width: 80px; padding-left: 4px; }
.chev { color: #555; }
:disabled .chev { color: #b1b1b1; }
.faded .chev { color: #c5696c; }
.col { display: flex; flex-direction: column; }
.c1 { width: 140px; }
.c2 { width: 89px; }
.cmd { display: flex; align-items: center; gap: 3px; height: 23px; }
.cmd svg { overflow: visible; }
.cmd .far { margin-left: 9px; }
.fmt { flex-direction: column; padding-left: 8px; }
.frow { display: flex; align-items: center; gap: 8px; height: 23px; }
.second { padding-left: 3px; }
.third { gap: 10px; }
.frow .ltr { width: 16px; font-size: 13px; color: #555; }
.frow .wd { display: flex; align-items: center; gap: 5px; }
.vs { width: 1px; height: 20px; background: #cfcfcf; }
.combo { position: relative; height: 23px; }
.combo select { width: 100%; height: 23px; padding: 0 3px; border: 1px solid #ababab; border-radius: 0; background: #fff; appearance: none; }
.combo::after { content: ""; position: absolute; right: 4px; top: 10px; border: 3px solid transparent; border-top-color: #555; }
.font { width: 139px; margin-right: -5px; }
.size { width: 55px; margin-right: -3px; }
.collapse { align-self: flex-end; margin: 0 8px 5px auto; }

/* Navigation pane */
.work { display: flex; flex: 1; min-height: 0; border-top: 1px solid #c8c8c8; }
.nav { display: flex; flex-direction: column; flex: none; width: 110px; background: #fff; }
.navhead { display: flex; align-items: center; flex: none; gap: 7px; height: 31px; padding-left: 8px; }
.navhead h1 { width: 60px; font-size: 20px; line-height: 28px; color: #a4373a; white-space: nowrap; }
.navbody { display: flex; flex: 1; min-height: 0; }
.navlist { flex: 1; overflow: hidden; }
.navlist h2 { display: flex; align-items: center; gap: 5px; height: 19px; padding-left: 12px; font-size: 12px; font-weight: 700; color: #555; }
.navlist li { display: flex; align-items: center; gap: 7px; height: 34px; padding-left: 10px; margin: 0 2px 0 4px; line-height: 13px; color: #666; border: solid #fff; border-width: 1px 0; white-space: nowrap; }
.navlist .queries li { padding-left: 12px; gap: 5px; }
.navlist .sel { background: #fdc0c3; color: #444; }
.vscroll { display: flex; flex-direction: column; flex: none; width: 16px; }
.vscroll button { display: flex; align-items: center; justify-content: center; flex: none; height: 15px; background: #fff; border: 1px solid #ababab; color: #666; }
.vscroll .up svg { transform: rotate(180deg); }
.vscroll .thumb { background: #fff; border: 1px solid #ababab; }
.vscroll .down { margin-top: auto; }
.light { background: #f0f0f0; margin: 3px 1px 1px 0; width: 15px; }
.light .thumb { height: 50px; }
.dark { background: #cfcfcf; margin: 3px 2px 2px 0; }
.dark .thumb { height: 17px; }

/* Datasheet */
.sheet { display: flex; flex-direction: column; flex: 1; min-width: 0; margin-left: 4px; border: solid #6e7278; border-width: 1px 0 0 2px; outline: 1px solid #c3c6ca; }
.gridrow { display: flex; flex: 1; min-height: 0; background: #e1e1e1; }
.gridwrap { flex: 1; min-width: 0; overflow: hidden; background: #fff; }
.grid { width: 100%; table-layout: fixed; border-collapse: separate; border-spacing: 0; font: 15px/20px Lato, "Noto Sans", sans-serif; font-variant-ligatures: none; color: #333; }
.w0 { width: 20px; }
.w1 { width: 63px; }
.w2 { width: 48px; }
.w3 { width: 362px; }
.w4 { width: 197px; }
.w5 { width: 94px; }
.w6 { width: 180px; }
.w7 { width: 92px; }
.w8 { width: 90px; }
.w9 { width: 78px; }
.w10 { width: 84px; }
.w11 { width: 139px; }
.grid td { height: 21px; padding: 0 1px 0 3px; border: solid #bfbfbf; border-width: 0 1px 1px 0; overflow: hidden; white-space: nowrap; }
.grid tbody tr:nth-child(odd) { background: #f3f3f3; }
.grid tbody td:first-child, .grid .corner, .grid th { background: #dfe3e8; }
.grid th { height: 22px; padding: 0; font-weight: 400; border: solid #bfbfbf; border-width: 0 1px 1px 0; }
.grid th div { display: flex; align-items: center; padding: 0 5px 0 3px; }
.grid th span { flex: 1; min-width: 0; overflow: hidden; text-align: center; white-space: nowrap; }
.grid th .l { text-align: left; }
.grid th svg { width: 7px; height: 4px; margin-left: 4px; }
.grid .cur { background: linear-gradient(#ffd75e, #ffe97c); border-bottom-color: #f7a3a0; }
.grid .corner { padding-left: 4px; }
.grid .last { border-right: 0; }
.grid .last div { padding: 0 0 0 3px; }

/* Record bar */
.recbar { display: flex; flex: none; height: 19px; border-bottom: 2px solid #f0f0f0; background: #eceef1; font-size: 11px; color: #555; }
.recnav { display: flex; align-items: center; gap: 8px; width: 197px; padding-left: 6px; border-right: 1px solid #b5b9c0; white-space: nowrap; }
.recnav input { margin: 0 -2px; }
.rec { width: 58px; height: 16px; padding: 0 2px; border: 1px solid #c5c8ce; background: #fff; }
.nofilter { display: flex; align-items: center; gap: 4px; width: 102px; padding-left: 9px; border-right: 1px solid #b5b9c0; white-space: nowrap; }
.find { width: 99px; padding-left: 6px; border-right: 1px solid #b5b9c0; }
.search { width: 70px; height: 16px; padding: 0 2px; border: 1px solid #c5c8ce; background: #fff; }
.hscroll { display: flex; flex: 1; margin: 1px 20px 1px 3px; background: #cfcfcf; }
.hscroll button { display: flex; align-items: center; justify-content: center; width: 15px; background: #fff; border: 1px solid #ababab; }
.hscroll .thumb { width: 283px; background: #fff; border: 1px solid #ababab; }
.hscroll .right { margin-left: auto; }

/* Taskbar */
.taskbar { display: flex; flex: none; height: 40px; background: linear-gradient(90deg, #36460d, #3d5108 30%, #3f5209 70%, #56652f 82%, #4d5c1b 88%, #3c4a10 94%, #46590a); color: #fff; }
.start { display: flex; align-items: center; justify-content: center; width: 48px; }
.wsearch { display: flex; align-items: center; gap: 7px; width: 344px; padding-left: 12px; background: #f3f4ef; border: 1px solid #c3c6bb; }
.wsearch input { flex: 1; min-width: 0; border: 0; background: none; font-size: 14px; outline: 0; }
.wsearch input::placeholder { color: #333; opacity: 1; }
.apps { display: flex; gap: 1px; }
.apps button { display: flex; align-items: center; justify-content: center; width: 48px; height: 40px; border: solid transparent; border-width: 2px 4px; }
.apps .run { border-bottom-color: #f4f7a5; }
.apps .on { background: #78901f; border-width: 2px 1px; }
.tray { display: flex; align-items: center; margin-left: auto; white-space: nowrap; }
.tray button { display: flex; align-items: center; margin-right: 9px; }
.tray .weather { gap: 10px; margin-right: 16px; font-size: 14px; }
.tray .lang { margin-left: 1px; margin-right: 10px; }
.tray .clock { flex-direction: column; width: 62px; line-height: 17px; margin-right: 11px; }
.tray .notif { position: relative; width: 24px; margin-right: 12px; }
.badge { position: absolute; left: 8px; top: 6px; width: 16px; height: 16px; border: 1px solid #b5c46a; border-radius: 50%; background: #6b8210; font-size: 10px; line-height: 14px; text-align: center; }
.peek { width: 5px; height: 40px; border-left: 1px solid #97a273; }
```
